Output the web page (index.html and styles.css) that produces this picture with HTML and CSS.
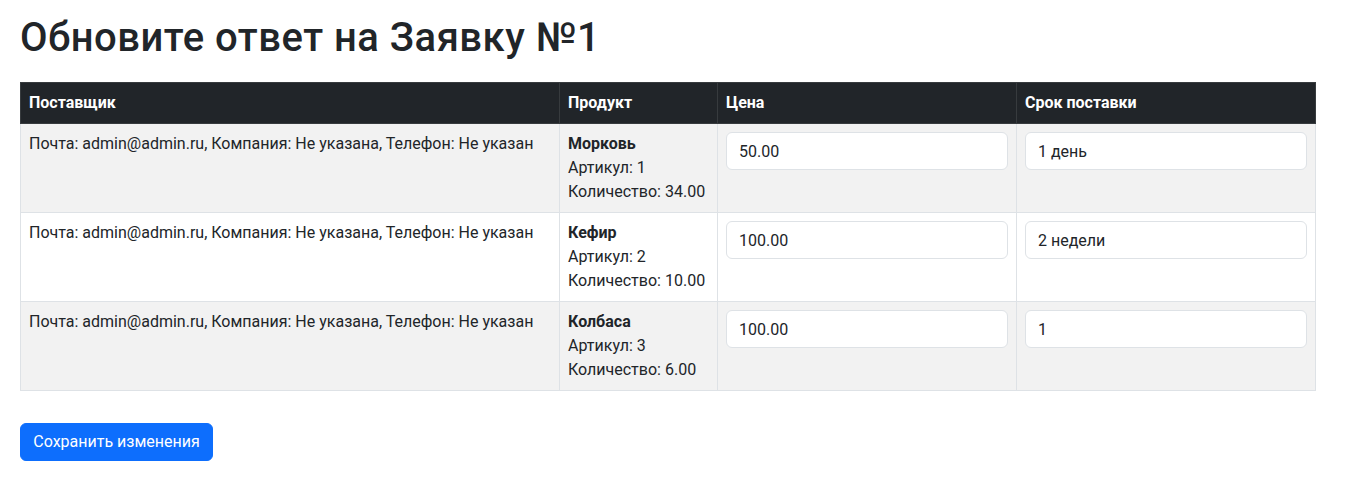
FILE: index.html
```html
<!DOCTYPE html>
<html lang="ru">
<head>
<meta charset="utf-8">
<title>Обновите ответ на Заявку №1</title>
<link rel="stylesheet" href="styles.css">
</head>
<body>
<main class="page">
  <h1 class="title">Обновите ответ на Заявку №1</h1>
  <form class="form">
    <table class="grid">
      <colgroup>
        <col class="c-supplier">
        <col class="c-product">
        <col class="c-price">
        <col class="c-term">
      </colgroup>
      <thead>
        <tr>
          <th>Поставщик</th>
          <th>Продукт</th>
          <th>Цена</th>
          <th>Срок поставки</th>
        </tr>
      </thead>
      <tbody>
        <tr class="odd">
          <td>Почта: admin@admin.ru, Компания: Не указана, Телефон: Не указан</td>
          <td><strong>Морковь</strong><br>Артикул: 1<br>Количество: 34.00</td>
          <td><input class="field" type="text" value="50.00"></td>
          <td><input class="field" type="text" value="1 день"></td>
        </tr>
        <tr>
          <td>Почта: admin@admin.ru, Компания: Не указана, Телефон: Не указан</td>
          <td><strong>Кефир</strong><br>Артикул: 2<br>Количество: 10.00</td>
          <td><input class="field" type="text" value="100.00"></td>
          <td><input class="field" type="text" value="2 недели"></td>
        </tr>
        <tr class="odd">
          <td>Почта: admin@admin.ru, Компания: Не указана, Телефон: Не указан</td>
          <td><strong>Колбаса</strong><br>Артикул: 3<br>Количество: 6.00</td>
          <td><input class="field" type="text" value="100.00"></td>
          <td><input class="field" type="text" value="1"></td>
        </tr>
      </tbody>
    </table>
    <div class="actions">
      <button class="btn" type="button">Сохранить изменения</button>
    </div>
  </form>
</main>
</body>
</html>
```
FILE: styles.css
```css
* { box-sizing: border-box; }
html, body { margin: 0; padding: 0; background: #fff; }
body {
  font-family: Roboto, "Liberation Sans", sans-serif;
  font-size: 16px;
  line-height: 24px;
  color: #212529;
}
.page { padding: 14px 30px 0 20px; }
.title {
  margin: 0 0 20px;
  font-size: 40px;
  line-height: 48px;
  font-weight: 500;
  letter-spacing: 0.5px;
}
.form { margin: 0; }
.grid {
  width: 1295px;
  border-collapse: collapse;
  table-layout: fixed;
}
.c-supplier { width: 539px; }
.c-product { width: 158px; }
.c-price { width: 299px; }
.c-term { width: 299px; }
.grid th, .grid td {
  padding: 8px;
  text-align: left;
  vertical-align: top;
  border: 1px solid #dee2e6;
}
.grid thead th {
  background: #212529;
  color: #fff;
  font-weight: 700;
  border-color: #373b3e;
}
.grid tbody tr { background: #fff; }
.grid tbody tr.odd { background: #f2f2f2; }
.grid strong { font-weight: 700; }
.field {
  display: block;
  width: 100%;
  height: 38px;
  padding: 6px 12px;
  font: inherit;
  color: #212529;
  background: #fff;
  border: 1px solid #dee2e6;
  border-radius: 6px;
}
.actions { margin-top: 32px; }
.btn {
  height: 38px;
  min-width: 193px;
  padding: 6px 12px;
  font: inherit;
  color: #fff;
  background: #0d6efd;
  border: 1px solid #0d6efd;
  border-radius: 6px;
}
```
